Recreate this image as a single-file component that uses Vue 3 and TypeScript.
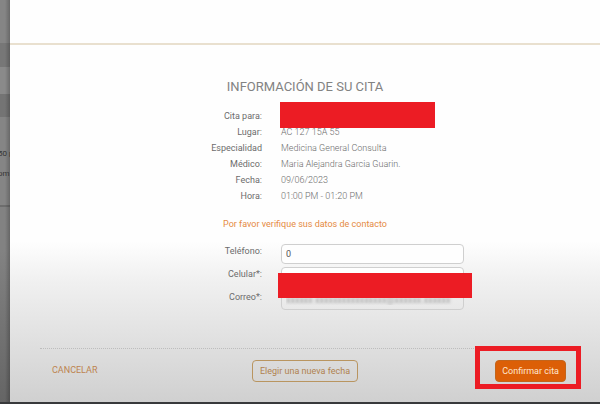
<script setup lang="ts">
import { ref } from 'vue'

interface Detail {
  label: string
  value: string
  hidden?: boolean
}

const details: Detail[] = [
  { label: 'Cita para:', value: '', hidden: true },
  { label: 'Lugar:', value: 'AC 127 15A 55' },
  { label: 'Especialidad', value: 'Medicina General Consulta' },
  { label: 'Médico:', value: 'Maria Alejandra Garcia Guarin.' },
  { label: 'Fecha:', value: '09/06/2023' },
  { label: 'Hora:', value: '01:00 PM - 01:20 PM' },
]

const telefono = ref('0')
const celular = ref('')
const correo = ref('xxxxxx xxxxxxxxxxxxxxxx@xxxxxx.xxxxxx')
</script>

<template>
  <div class="screen">
    <div class="behind">
      <p>50 p</p>
      <p>pm</p>
    </div>
    <main class="dialog">
      <header class="top"></header>
      <section class="content">
        <h1>INFORMACIÓN DE SU CITA</h1>
        <dl class="details">
          <template v-for="d in details" :key="d.label">
            <dt>{{ d.label }}</dt>
            <dd>{{ d.value }}<span v-if="d.hidden" class="cover cover-name"></span></dd>
          </template>
        </dl>
        <p class="notice">Por favor verifique sus datos de contacto</p>
        <form class="contact" @submit.prevent>
          <label for="telefono">Teléfono:</label>
          <input id="telefono" v-model="telefono" type="tel" />
          <label for="celular">Celular*:</label>
          <input id="celular" v-model="celular" type="tel" />
          <label for="correo">Correo*:</label>
          <input id="correo" v-model="correo" class="obscured" type="text" />
          <span class="cover cover-contact"></span>
        </form>
      </section>
      <footer class="actions">
        <button type="button" class="cancel">CANCELAR</button>
        <button type="button" class="change">Elegir una nueva fecha</button>
        <div class="confirm-wrap">
          <button type="button" class="confirm">Confirmar cita</button>
          <span class="highlight"></span>
        </div>
      </footer>
    </main>
  </div>
</template>

<style>
body {
  background: #38393b;
}
</style>

<style scoped>
.screen {
  box-sizing: border-box;
  display: flex;
  min-height: 100vh;
  padding-bottom: 2px;
  font-family: Roboto, "Liberation Sans", sans-serif;
  font-size: 9px;
  line-height: 16px;
  color: #6c6c6c;
}
.behind {
  box-sizing: border-box;
  width: 10px;
  padding-top: 146px;
  overflow: hidden;
  white-space: nowrap;
  font-size: 8px;
  color: #333;
  background:
    linear-gradient(90deg, transparent 50%, rgba(0, 0, 0, 0.22)),
    linear-gradient(#858585 0 43px, #777 43px 67px, #8a8a8a 67px 94px, #747474 94px 117px, #858585 117px 205px, #6d6d6d 205px 207px, #828282 207px 250px, #656565 100%);
}
.behind p {
  margin: 0 0 4px -2px;
}
.dialog {
  flex: 1;
  display: flex;
  flex-direction: column;
  min-width: 0;
  background: linear-gradient(#fefefe 60%, #f0f0f0 70%, #e2e2e2 83%, #d0d0d0);
}
.top {
  height: 43px;
  border-bottom: 2px solid #e9e0cf;
}
.content {
  flex: 1;
  width: 318px;
  margin: 0 auto;
  padding-top: 33px;
}
h1 {
  margin: 0 0 12px;
  text-align: center;
  font-size: 13px;
  font-weight: 400;
  line-height: 18px;
  color: #828282;
}
.details,
.contact {
  display: grid;
  grid-template-columns: 116px 1fr;
  column-gap: 19px;
  margin: 0;
}
dt,
label {
  text-align: right;
}
label {
  line-height: 14px;
}
dd {
  position: relative;
  margin: 0;
  font-weight: 300;
}
.notice {
  margin: 12px 0;
  text-align: center;
  color: #e58a43;
}
.contact {
  position: relative;
  row-gap: 3px;
}
input {
  box-sizing: border-box;
  width: 100%;
  height: 20px;
  padding: 0 4px;
  border: 1px solid #cfcfcf;
  border-radius: 4px;
  background: #fefefe;
  font: inherit;
  color: #555;
}
.obscured {
  background: transparent;
  color: transparent;
  text-shadow: 0 0 3px #999;
}
.cover {
  position: absolute;
  background: #ec1c24;
}
.cover-name {
  top: -6px;
  left: -1px;
  width: 155px;
  height: 26px;
}
.cover-contact {
  top: 29px;
  right: -8px;
  width: 194px;
  height: 25px;
}
.actions {
  display: grid;
  grid-template-columns: 1fr auto 1fr;
  align-items: start;
  margin: 0 30px;
  padding: 11px 0 20px;
  border-top: 1px dotted #bdbdbd;
}
button {
  padding: 0;
  border: 0;
  background: none;
  font: inherit;
  line-height: 20px;
  cursor: pointer;
}
.cancel {
  justify-self: start;
  margin-left: 12px;
  color: #bd8450;
}
.change {
  padding: 0 7px;
  border: 1px solid #b99560;
  border-radius: 4px;
  color: #b0824f;
}
.confirm-wrap {
  position: relative;
  justify-self: end;
  margin-right: 4px;
}
.confirm {
  display: block;
  padding: 0 6px;
  border: 1px solid #c3651c;
  border-radius: 4px;
  background: #dc5f07;
  color: #ffe6cf;
}
.highlight {
  position: absolute;
  inset: -14px -15px -7px -20px;
  border: 5px solid #ec1c24;
  pointer-events: none;
}
</style>
